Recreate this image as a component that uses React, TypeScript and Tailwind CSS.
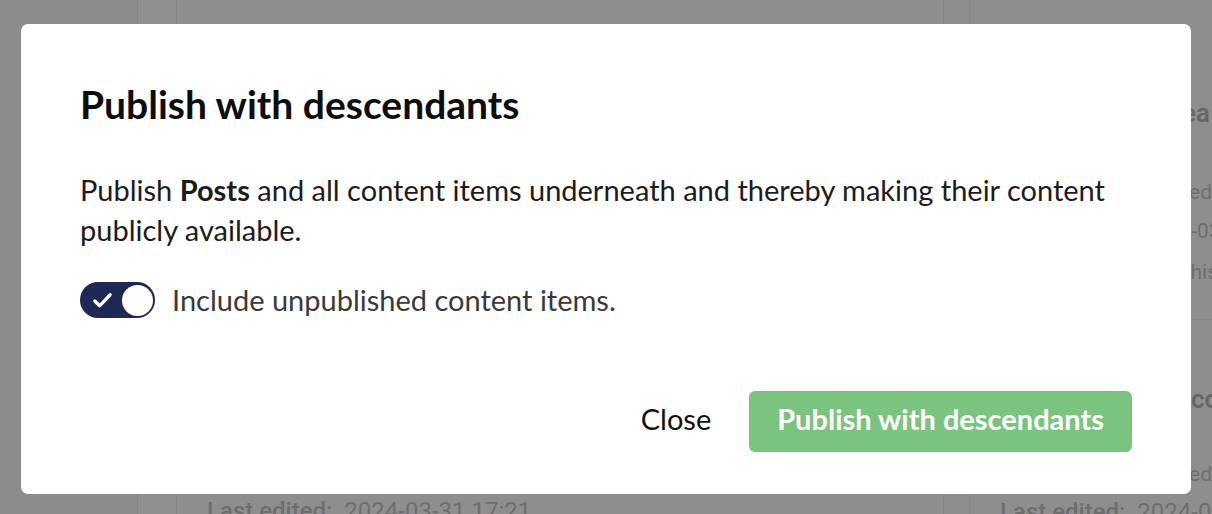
import React from "react";

export default function App() {
  return (
    <div className="relative w-[1212px] h-[514px] overflow-hidden bg-[#8e8e8e] font-['Lato','Noto_Sans',sans-serif]">
      {/* background page (dimmed) */}
      <div className="flex h-full font-['Roboto',sans-serif] text-[#6e6e6e]">
        <div className="w-[138px] h-full bg-[#8c8c8c] border-r border-[#858585]" />
        <div className="w-[39px] h-full bg-[#8f8f8f] border-r border-[#868686]" />
        <div className="flex-1 h-full flex flex-col justify-end pl-[30px]">
          <div className="text-[24px] leading-none translate-y-[9px] whitespace-nowrap">
            <span className="font-medium">Last edited:</span>&nbsp; 2024-03-31 17:21
          </div>
        </div>
        <div className="w-[27px] h-full bg-[#8d8d8d] border-l border-r border-[#868686]" />
        <div className="w-[242px] h-full flex flex-col">
          <div className="h-[320px] border-b border-[#868686] flex flex-col text-[21px] leading-none whitespace-nowrap">
            <div className="mt-[100px] pl-[190px] text-[26px] font-semibold text-[#666]">Idea</div>
            <div className="mt-[56px] pl-[169px]">Created</div>
            <div className="mt-[18px] pl-[174px]">2024-03</div>
            <div className="mt-[20px] pl-[208px]">This</div>
          </div>
          <div className="flex flex-col text-[21px] leading-none whitespace-nowrap">
            <div className="mt-[66px] pl-[199px] text-[26px] font-semibold text-[#666]">Inco</div>
            <div className="mt-[52px] pl-[169px]">Created</div>
          </div>
        </div>
      </div>
      <div className="absolute left-[1000px] top-[500px] font-['Roboto',sans-serif] text-[#6e6e6e] text-[24px] leading-none whitespace-nowrap">
        <span className="font-medium">Last edited:</span>&nbsp; 2024-03-31
      </div>

      {/* modal */}
      <div className="absolute inset-0 flex justify-center pt-[24px]">
        <div className="w-[1170px] h-[470px] bg-white rounded-[7px] px-[59px] pt-[56px] flex flex-col">
          <h2 className="text-[39px] leading-[48px] font-bold text-[#0d0d0d]">Publish with descendants</h2>
          <p className="mt-[42px] text-[29px] leading-[40px] text-[#1c1c1c]">
            Publish <span className="font-bold">Posts</span> and all content items underneath and thereby making their content publicly available.
          </p>
          <div className="mt-[30px] flex items-center gap-[17px]">
            <div className="w-[75px] h-[36px] rounded-full bg-[#1f2754] flex items-center justify-between px-[2.5px]">
              <svg width="23" height="23" viewBox="0 0 24 24" className="ml-[8px]">
                <path d="M4 12.5l5 5L20 6" fill="none" stroke="white" strokeWidth="3.4" strokeLinecap="round" strokeLinejoin="round" />
              </svg>
              <div className="w-[31px] h-[31px] rounded-full bg-white" />
            </div>
            <span className="text-[29px] leading-[40px] text-[#3a3a3a]">Include unpublished content items.</span>
          </div>
          <div className="mt-auto mb-[42px] flex justify-end items-center gap-[38px]">
            <span className="text-[29px] leading-[40px] text-[#111] pb-[6px]">Close</span>
            <button className="h-[61px] px-[28px] pb-[5px] rounded-[6px] bg-[#7ac47f] text-white text-[29px] font-bold">
              Publish with descendants
            </button>
          </div>
        </div>
      </div>
    </div>
  );
}
